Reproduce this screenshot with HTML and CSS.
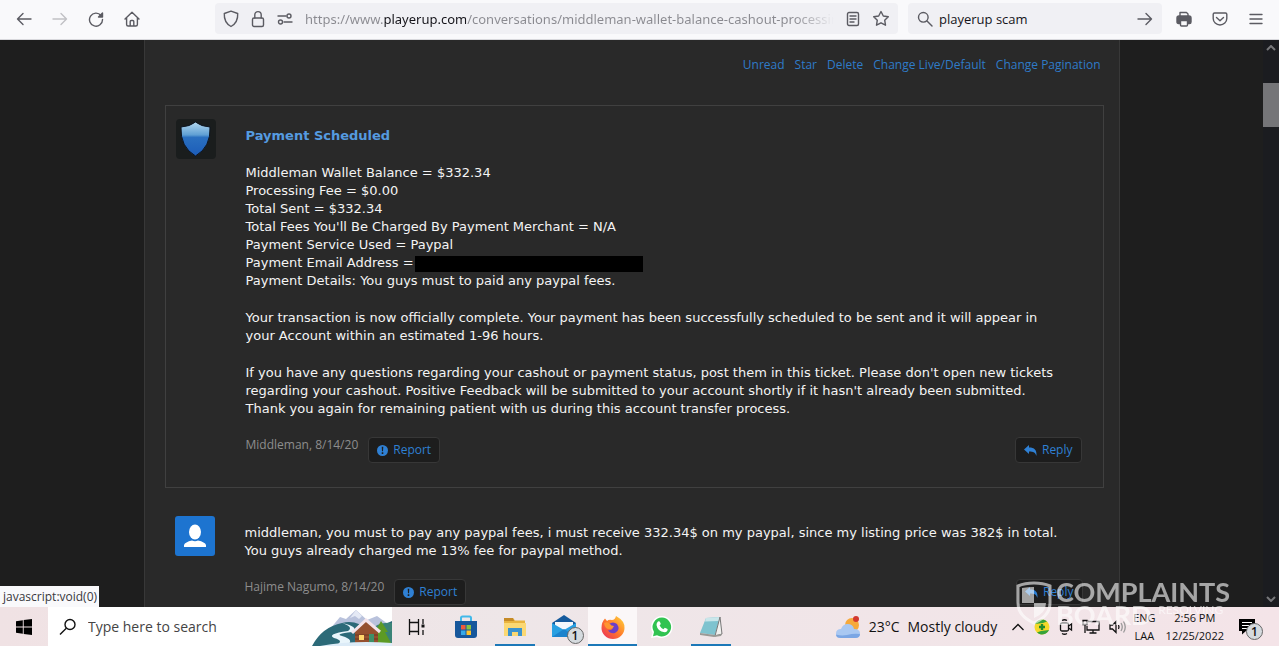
FILE: index.html
```
<!DOCTYPE html>
<html lang="en">
<head>
    <meta charset="utf-8">
    <title>Payment Scheduled</title>
    <link rel="stylesheet" href="styles.css">
</head>
<body>

<!-- browser toolbar -->
<header class="toolbar">
    <div class="nav-buttons">
        <button class="icon-btn" aria-label="Back">
            <svg width="16" height="16" viewBox="0 0 16 16"><path d="M15 8H1.5M7 2.5L1.5 8L7 13.5"/></svg>
        </button>
        <button class="icon-btn off" aria-label="Forward">
            <svg width="16" height="16" viewBox="0 0 16 16"><path d="M1 8h13.5M9 2.5L14.5 8L9 13.5"/></svg>
        </button>
        <button class="icon-btn" aria-label="Reload">
            <svg width="16" height="16" viewBox="0 0 16 16"><path d="M13 4.500A6.500 6.500 0 1 0 14.500 8.500"/><path class="fill" d="M14.500 2v4H10.500z"/></svg>
        </button>
        <button class="icon-btn" aria-label="Home">
            <svg width="16" height="16" viewBox="0 0 16 16"><path d="M1 8L8 1.3L15 8M2.6 7v6.5q0 1.5 1.5 1.5h7.8q1.5 0 1.5-1.5V7M6.2 15v-4.5q0-1 1-1h1.6q1 0 1 1V15"/></svg>
        </button>
    </div>
    <div class="address">
        <svg width="16" height="18" viewBox="0 0 16 18"><path d="M8 1.2L14.7 3.5Q15.2 12.5 8 16.5Q.8 12.5 1.3 3.5Z"/></svg>
        <svg width="14" height="18" viewBox="0 0 14 18"><rect x="1.5" y="8" width="11" height="8.5" rx="1.5"/><path d="M3.8 8V4.8a3.2 3.2 0 0 1 6.4 0V8"/></svg>
        <svg width="16" height="14" viewBox="0 0 16 14"><path d="M1 4h8M7 10h8"/><circle cx="12" cy="4" r="2"/><circle cx="3.5" cy="10" r="2"/></svg>
        <input class="url" type="text" aria-label="Address" value="https://www.playerup.com/conversations/middleman-wallet-balance-cashout-processing">
        <svg width="14" height="16" viewBox="0 0 14 16"><rect x="1.5" y="1.5" width="11" height="13" rx="1.5"/><path d="M4 5h6M4 8h6M4 11h4"/></svg>
        <svg width="18" height="17" viewBox="0 0 18 17"><path d="M9 1.5L11.3 6L16.3 6.7L12.7 10.2L13.5 15.2L9 12.8L4.5 15.2L5.3 10.2L1.7 6.7L6.7 6Z"/></svg>
    </div>
    <div class="search">
        <svg width="16" height="16" viewBox="0 0 16 16"><circle cx="6.3" cy="6.3" r="4.8"/><path d="M10 10l5 5"/></svg>
        <input type="text" aria-label="Search" value="playerup scam">
        <button class="icon-btn" aria-label="Go">
            <svg width="16" height="16" viewBox="0 0 16 16"><path d="M1 8h13.5M9 2.5L14.5 8L9 13.5"/></svg>
        </button>
    </div>
    <div class="tools">
        <button class="icon-btn" aria-label="Print">
            <svg width="16" height="16" viewBox="0 0 16 16"><path d="M4 6V1.5h6.5L12 3v3"/><path class="fill" d="M3 5h10q2 0 2 2v4q0 1.5-1.5 1.5h-11Q1 12.5 1 11V7q0-2 2-2z"/><path class="paper" d="M4.5 9.5h7V14q0 1-1 1h-5q-1 0-1-1z"/></svg>
        </button>
        <button class="icon-btn" aria-label="Save to Pocket">
            <svg width="16" height="16" viewBox="0 0 16 16"><path d="M2.5 2h11q1.3 0 1.3 1.3V7.5a6.8 6.5 0 0 1-13.6 0V3.3Q1.2 2 2.5 2zM4.5 6.5L8 9.8l3.5-3.3"/></svg>
        </button>
        <button class="icon-btn" aria-label="Menu">
            <svg width="16" height="16" viewBox="0 0 16 16"><path d="M2 3.5h12M2 8h12M2 12.5h12"/></svg>
        </button>
    </div>
</header>

<!-- the page -->
<div class="viewport">
    <main class="page">
        <div class="container">
            <nav class="links">
                <a href="#">Unread</a>
                <a href="#">Star</a>
                <a href="#">Delete</a>
                <a href="#">Change Live/Default</a>
                <a href="#">Change Pagination</a>
            </nav>

            <article class="message staff">
                <svg class="avatar" width="40" height="40" viewBox="0 0 40 40">
                    <defs>
                        <linearGradient id="top" x1="0" y1="0" x2="0" y2="1"><stop offset="0" stop-color="#b4d8ef"/><stop offset=".38" stop-color="#5fa0d4"/><stop offset=".45" stop-color="#2a70c0"/><stop offset="1" stop-color="#1c5cb8"/></linearGradient>
                    </defs>
                    <rect width="40" height="40" rx="4" fill="#1a1d1d"/>
                    <path d="M19.5 3Q25 7.5 34 8Q35 28 19.5 37Q4 28 5 8Q14 7.5 19.5 3Z" fill="url(#top)" stroke="#0c1420"/>
                </svg>
                <div class="body">
                    <h2>Payment Scheduled</h2>
                    <p>
                        Middleman Wallet Balance = $332.34<br>
                        Processing Fee = $0.00<br>
                        Total Sent = $332.34<br>
                        Total Fees You'll Be Charged By Payment Merchant = N/A<br>
                        Payment Service Used = Paypal<br>
                        Payment Email Address =<span class="redacted"></span><br>
                        Payment Details: You guys must to paid any paypal fees.
                    </p>
                    <p>Your transaction is now officially complete. Your payment has been successfully scheduled to be sent and it will appear in<br>your Account within an estimated 1-96 hours.</p>
                    <p>If you have any questions regarding your cashout or payment status, post them in this ticket. Please don't open new tickets<br>regarding your cashout. Positive Feedback will be submitted to your account shortly if it hasn't already been submitted.<br>Thank you again for remaining patient with us during this account transfer process.</p>
                    <div class="meta">
                        <span>Middleman, 8/14/20</span>
                        <button class="btn"><svg width="11" height="11" viewBox="0 0 11 11"><circle cx="5.5" cy="5.5" r="5.5"/><path class="mark" d="M4.7 1.8h1.6l-.3 4.4h-1zM4.7 7.3h1.6v1.6H4.7z"/></svg>Report</button>
                        <button class="btn reply"><svg width="13" height="11" viewBox="0 0 13 11"><path d="M5 0v2.6C10.5 2.6 12.8 5 12.5 11C11.5 7.5 9.5 6.4 5 6.4V9L0 4.5Z"/></svg>Reply</button>
                    </div>
                </div>
            </article>

            <article class="message">
                <svg class="avatar" width="40" height="40" viewBox="0 0 40 40">
                    <rect width="40" height="40" rx="3" fill="#1d74d0"/>
                    <ellipse cx="20" cy="16" rx="6" ry="7.5" fill="#fff"/>
                    <path d="M9 31v-2Q10 26 17 24.5q3 1.5 6 0Q30 26 31 29v2z" fill="#fff"/>
                </svg>
                <div class="body">
                    <p>middleman, you must to pay any paypal fees, i must receive 332.34$ on my paypal, since my listing price was 382$ in total.<br>You guys already charged me 13% fee for paypal method.</p>
                    <div class="meta">
                        <span>Hajime Nagumo, 8/14/20</span>
                        <button class="btn"><svg width="11" height="11" viewBox="0 0 11 11"><circle cx="5.5" cy="5.5" r="5.5"/><path class="mark" d="M4.7 1.8h1.6l-.3 4.4h-1zM4.7 7.3h1.6v1.6H4.7z"/></svg>Report</button>
                        <button class="btn reply"><svg width="13" height="11" viewBox="0 0 13 11"><path d="M5 0v2.6C10.5 2.6 12.8 5 12.5 11C11.5 7.5 9.5 6.4 5 6.4V9L0 4.5Z"/></svg>Reply</button>
                    </div>
                </div>
            </article>
        </div>
    </main>
    <div class="scrollbar">
        <svg width="10" height="6" viewBox="0 0 10 6"><path d="M1 5l4-4l4 4"/></svg>
        <div class="thumb"></div>
        <svg width="10" height="6" viewBox="0 0 10 6"><path d="M1 1l4 4l4-4"/></svg>
    </div>
    <div class="status">javascript:void(0)</div>
</div>

<!-- windows taskbar -->
<footer class="taskbar">
    <button class="start" aria-label="Start">
        <svg width="16" height="16" viewBox="0 0 16 16"><path d="M0 2.2L6.8 1.2V7.5H0zM7.7 1.1L16 0V7.5H7.700zM0 8.4h6.8v6.3L0 13.8zM7.700 8.4H16V16L7.7 14.9z"/></svg>
    </button>
    <div class="task-search">
        <svg width="18" height="18" viewBox="0 0 18 18"><circle cx="11" cy="6.5" r="5" fill="none" stroke="#111" stroke-width="1.4"/><path d="M7.3 10.2L1 16.5" stroke="#111" stroke-width="1.4"/></svg>
        <input type="text" aria-label="Type here to search" placeholder="Type here to search">
        <svg class="scene" width="80" height="39" viewBox="0 0 80 39">
            <path d="M18 22L28 10L34 12L44 3L55 13L65 9L80 20V39H18z" fill="#b9c2dc"/>
            <path d="M44 3l-6 8 5-2 4 3 3-3z" fill="#e4e9f5"/>
            <path d="M0 39Q10 20 30 16Q44 12 58 24L80 14V39z" fill="#2c6a78"/>
            <path d="M56 24Q68 14 80 16V39H56z" fill="#3a8377"/>
            <path d="M30 16Q42 20 36 24Q14 27 22 31Q34 34 22 39H34Q44 33 30 29Q22 27 40 25Q48 20 30 16z" fill="#e9f5fb"/>
            <path d="M69 14l7 11h-3l6 11H60l6-11h-3z" fill="#5d9a24"/>
            <path d="M43 24L54 14L66 24V37H43z" fill="#95502f"/>
            <path d="M43 28h23M43 32h23" stroke="#6f3620"/>
            <path d="M40 26L54 13L68 25" fill="none" stroke="#f3e3ea" stroke-width="3"/>
            <path d="M47 28h5v5h-5z" fill="#ffd66b"/><path d="M57 27h5v10h-5z" fill="#3f8f68"/>
            <path d="M8 39Q40 33 80 36V39z" fill="#dcebf7"/>
        </svg>
    </div>
    <div class="apps">
        <button aria-label="Task View">
            <svg width="18" height="16" viewBox="0 0 18 16" fill="none" stroke="#111" stroke-width="1.3"><path d="M1.5 0v3.5h9V0M1.5 16v-3.5h9V16M1.5 3.5v9M10.5 3.5v9M15 0v5M15 11v5"/><path d="M13.5 5.5h3v3h-3z" fill="#111" stroke="none"/></svg>
        </button>
        <button aria-label="Microsoft Store">
            <svg width="24" height="24" viewBox="0 0 24 24"><path d="M7 7V3q0-1.5 1.5-1.5h7Q17 1.5 17 3v4" fill="none" stroke="#42b9ea" stroke-width="2"/><path d="M1 6h22v14q0 3-3 3H4q-3 0-3-3z" fill="#17589c"/><path d="M7 10h4.5v4.5H7z" fill="#ef5a3c"/><path d="M12.5 10H17v4.5h-4.5z" fill="#8ac440"/><path d="M7 15.5h4.5V20H7z" fill="#36a9e8"/><path d="M12.5 15.5H17V20h-4.5z" fill="#fcc32c"/></svg>
        </button>
        <button class="running" aria-label="File Explorer">
            <svg width="24" height="24" viewBox="0 0 24 24"><path d="M1 3h9l2 2.5h10V21H1z" fill="#e9b43f"/><path d="M1 8h22v13H1z" fill="#fbd873"/><path d="M1 3h9l1 3H1z" fill="#c58a27"/><path d="M5 13h14v8h-4v-4H9v4H5z" fill="#3b93cf"/></svg>
        </button>
        <button aria-label="Mail">
            <span class="badged">
                <svg width="26" height="24" viewBox="0 0 26 24"><path d="M1 8L13 0L25 8V22H1z" fill="#155a9c"/><path d="M4 7h18v9H4z" fill="#f4f8fc"/><path d="M1 8l12 7L25 8V22H1z" fill="#28a0e2"/><path d="M1 22L13 14L25 22z" fill="#1b83cd"/></svg>
                <b class="badge">1</b>
            </span>
        </button>
        <button class="running active" aria-label="Firefox">
            <svg width="24" height="24" viewBox="0 0 24 24">
                <defs><linearGradient id="fox" x1="1" y1="0" x2="0" y2="1"><stop offset="0" stop-color="#ffd93b"/><stop offset=".5" stop-color="#ff7a2b"/><stop offset="1" stop-color="#e8265f"/></linearGradient></defs>
                <path d="M15 1Q24 6 23.5 13A11.5 11 0 0 1 .5 13Q.5 7 4 3.5L6 6Q8 4 11 5Q14 5 15 1z" fill="url(#fox)"/>
                <path d="M8 9Q12 6 16 9Q20 15 14 18Q9 19 7 15Q10 16 12 13Q8 12 8 9z" fill="#6a3fc8"/>
                <path d="M3 8Q7 6 9 9Q10 11 13 11Q12 14 8 14Q4 14 3 8z" fill="#ff9530"/>
            </svg>
        </button>
        <button aria-label="WhatsApp">
            <svg width="24" height="24" viewBox="0 0 24 24"><path d="M12 1A11 11 0 1 1 7 22L1 23L2.5 17.5A11 11 0 0 1 12 1z" fill="#fff"/><path d="M12 2.5A9.5 9.5 0 1 1 7 20.3L3 21.3L4 17A9.5 9.5 0 0 1 12 2.5z" fill="#31c351"/><path d="M8 6.5q1.5-1 2.2 1l.6 1.6-1.2 1.5q1.3 2.5 3.8 3.6l1.4-1.5 2.8 1.4q.3 3-3 3.2Q7.5 16.5 6.5 10Q6.5 7.5 8 6.5z" fill="#fff"/></svg>
        </button>
        <button class="running" aria-label="Notepad">
            <svg width="24" height="24" viewBox="0 0 24 24"><path d="M7 3L21 2L16 20L1 18z" fill="#7fc3cf"/><path d="M7 3L21 2L20 6L6 6.5z" fill="#c9e6ea"/><path d="M21 2L23 19L16 21z" fill="#f1f1ef" stroke="#777"/><path d="M1 18L16 20L23 19L22 21L15 22L1 20z" fill="#9a9a96"/></svg>
        </button>
    </div>
    <div class="weather">
        <svg width="26" height="24" viewBox="0 0 26 24"><circle cx="17" cy="10" r="7" fill="#f6a93b"/><circle cx="21" cy="4" r="3" fill="#d2382f"/><path d="M6 23q-5 0-5-4.5Q1 14 6 14Q8 9 12.5 9Q18 9 19 14Q25 14 25 18.5Q25 23 20 23z" fill="#a9c8f2"/><path d="M6 23q-5 0-5-3.5Q6 21 12 20Q19 18 25 19Q25 23 20 23z" fill="#7ba6e4"/></svg>
        <span>23°C</span>
        <span>Mostly cloudy</span>
    </div>
    <div class="tray">
        <svg width="14" height="10" viewBox="0 0 14 10"><path d="M1.5 8L7 2.5L12.5 8"/></svg>
        <svg width="16" height="16" viewBox="0 0 16 16"><circle cx="8" cy="8" r="7.5" fill="#f3d92a" stroke="none"/><path d="M1 5A7.5 7.5 0 0 1 13 2.5L9 4zM15 11A7.5 7.5 0 0 1 3 13.5L7 12z" fill="#35a33a" stroke="none"/><path d="M8 5v6M5 8h6" stroke="#1f8a2d" stroke-width="2.4"/></svg>
        <svg width="14" height="16" viewBox="0 0 14 16"><rect x="1.5" y="4" width="8" height="8" rx="1.5"/><path d="M9.5 7l3-2v6l-3-2M3 1.5Q5.5 0 8 1.5M3 14.5Q5.5 16 8 14.5"/></svg>
        <svg width="18" height="16" viewBox="0 0 18 16"><path d="M6 2.5h11v8.5H5V7M11 11v3M7.5 14h7M1 1.5h4v4H1zM3 5.5V14"/></svg>
        <svg width="18" height="16" viewBox="0 0 18 16"><path d="M1 6h2.5L7 2.5v11L3.5 10H1zM9.5 6q1 2 0 4"/><path d="M12 4q2.5 4 0 8M14.5 2.5q3.5 5.5 0 11" stroke="#999"/></svg>
    </div>
    <div class="stack lang"><span>ENG</span><span>LAA</span></div>
    <div class="stack"><span>2:56 PM</span><span>12/25/2022</span></div>
    <button class="notify" aria-label="Notifications">
        <span class="badged">
            <svg width="18" height="17" viewBox="0 0 18 17"><path d="M1 1h16v12H8l-4 3.5V13H1z"/><path d="M4 4.5h10M4 7.5h10M4 10.5h6" stroke="#fff"/></svg>
            <b class="badge">1</b>
        </span>
    </button>
</footer>

<!-- watermark over page and taskbar -->
<div class="watermark">
    <svg width="36" height="44" viewBox="0 0 36 44"><path d="M18 2Q27 2 34 5V22Q34 35 18 42Q2 35 2 22V5Q9 2 18 2z" fill="none" stroke="#fff" stroke-width="3"/><path d="M6 7Q12 6 18 6V22H6zM18 22H30Q30 32 18 37z" fill="#fff"/></svg>
    <div class="mark-text">
        <span>COMPLAINTS</span>
        <span>BOARD <small>RESOLVING</small></span>
    </div>
</div>

</body>
</html>
```
FILE: styles.css
```
* {
    box-sizing: border-box;
}

body {
    margin: 0;
    height: 100vh;
    display: grid;
    grid-template-rows: 40px 1fr 39px;
    overflow: hidden;
    background: #1e1e1e;
    font-family: "Open Sans", "Noto Sans", sans-serif;
    font-size: 12px;
}

button {
    border: 0;
    padding: 0;
    background: none;
    font: inherit;
}

input {
    border: 0;
    padding: 0;
    outline: 0;
    min-width: 0;
    background: none;
    font: inherit;
}

svg {
    display: block;
    flex: none;
}

/* browser toolbar */
.toolbar {
    display: flex;
    align-items: center;
    padding: 0 15px 2px 16px;
    background: #f9f9fb;
    border-bottom: 1px solid #d8d8dc;
    font-size: 13px;
}

.toolbar svg {
    fill: none;
    stroke: #5b5b62;
    stroke-width: 1.4;
    stroke-linejoin: round;
    stroke-linecap: round;
}

.toolbar .fill {
    fill: #5b5b62;
}

.toolbar .paper {
    fill: #f9f9fb;
}

.nav-buttons {
    display: flex;
    gap: 20px;
    width: 199px;
}

.off {
    opacity: .35;
}

.address,
.search {
    display: flex;
    align-items: center;
    height: 31px;
    background: #f0f0f4;
    border-radius: 4px;
}

.address {
    flex: 1;
    gap: 12px;
    padding: 0 8px;
}

.url {
    flex: 1;
    font-family: "Noto Sans", "Open Sans", sans-serif;
    /* the host is darker and the end fades out */
    background: linear-gradient(to right, #8a8a90 78px, #15141a 78px, #15141a 161px, #8a8a90 161px, #8a8a90 calc(100% - 40px), #f0f0f4);
    background-clip: text;
    -webkit-background-clip: text;
    color: transparent;
}

.search {
    width: 254px;
    margin-left: 10px;
    padding: 0 9px;
    gap: 6px;
}

.search input {
    flex: 1;
    color: #15141a;
}

.tools {
    display: flex;
    gap: 20px;
    margin-left: 14px;
}

/* page */
.viewport {
    position: relative;
    display: flex;
    min-height: 0;
    overflow: hidden;
}

.page {
    flex: 1;
}

.container {
    max-width: 976px;
    min-height: 100%;
    margin: 0 auto;
    padding: 16px 15px 0 20px;
    background: #292929;
    border: solid #383838;
    border-width: 0 1px;
}

.links {
    display: flex;
    justify-content: flex-end;
    gap: 10px;
    padding-right: 3px;
    line-height: 18px;
}

a {
    color: #2f7bc8;
    text-decoration: none;
}

.message {
    display: flex;
    gap: 30px;
    padding: 13px 21px 0 10px;
}

.staff {
    margin-top: 31px;
    margin-bottom: 15px;
    padding-bottom: 23px;
    border: 1px solid #404040;
}

.body {
    flex: 1;
    padding-top: 8px;
    color: #f4f4f4;
    font-family: Verdana, "DejaVu Sans", sans-serif;
    font-size: 13px;
    line-height: 18px;
    white-space: nowrap;
}

.body h2 {
    margin: 0 0 19px;
    color: #559be0;
    font-size: 13px;
}

.body p {
    margin: 0 0 19px;
}

.body p:nth-last-child(2) {
    margin-bottom: 18px;
}

.redacted {
    display: inline-block;
    width: 228px;
    height: 16px;
    margin-left: 1px;
    background: #000;
    vertical-align: middle;
}

.meta {
    display: flex;
    align-items: center;
    gap: 10px;
    color: #8d8d8d;
    font-family: "Open Sans", "Noto Sans", sans-serif;
    font-size: 12px;
}

.meta span {
    padding-bottom: 10px;
}

.btn {
    display: flex;
    align-items: center;
    gap: 5px;
    height: 26px;
    padding: 0 8px;
    background: #1d1d1d;
    border: 1px solid #373737;
    border-radius: 4px;
    color: #2f80d4;
}

.btn svg {
    fill: #2f80d4;
}

.btn .mark {
    fill: #1d1d1d;
}

.reply {
    margin-left: auto;
}

.scrollbar {
    display: flex;
    flex-direction: column;
    align-items: center;
    width: 16px;
    padding: 5px 0;
    background: #1b1c20;
}

.scrollbar svg {
    fill: none;
    stroke: #77777a;
    stroke-width: 2;
}

.scrollbar svg:last-child {
    margin-top: auto;
}

.thumb {
    width: 100%;
    height: 44px;
    margin-top: 32px;
    background: #757578;
}

.status {
    position: absolute;
    left: 0;
    bottom: 0;
    height: 21px;
    padding: 0 2px 0 3px;
    background: #f9f9fb;
    color: #38383d;
    line-height: 22px;
}

/* taskbar */
.taskbar {
    display: flex;
    align-items: center;
    background: linear-gradient(to right, #f0e2e4, #eee6e8 40%, #f4e4e8);
    color: #111;
}

.start {
    display: flex;
    justify-content: center;
    width: 48px;
}

.task-search {
    display: flex;
    align-items: center;
    width: 344px;
    height: 100%;
    padding-left: 11px;
    gap: 11px;
    background: #fff;
    font-size: 14px;
}

.task-search input {
    flex: 1;
}

.task-search input::placeholder {
    color: #444;
    opacity: 1;
}

.apps {
    display: flex;
    height: 100%;
}

.apps button {
    display: flex;
    align-items: center;
    justify-content: center;
    width: 49px;
}

/* bar under the icon of an open app */
.apps .running {
    background: linear-gradient(#1c78b8, #1c78b8) bottom / 40px 2px no-repeat;
}

.apps .active {
    background-color: #fbf7f8;
    background-size: 100% 2px;
}

.badged {
    position: relative;
}

.badge {
    position: absolute;
    right: -7px;
    bottom: -5px;
    width: 17px;
    height: 17px;
    border: 1px solid #666;
    border-radius: 50%;
    background: #d5dade;
    color: #111;
    font-size: 12px;
    font-weight: 600;
    line-height: 15px;
    text-align: center;
}

.weather {
    display: flex;
    align-items: center;
    gap: 8px;
    margin-left: auto;
    font-size: 14px;
}

.tray {
    display: flex;
    align-items: center;
    gap: 9px;
    margin-left: 14px;
}

.tray svg {
    fill: none;
    stroke: #111;
    stroke-width: 1.3;
}

.stack {
    display: flex;
    flex-direction: column;
    align-items: center;
    margin-left: 10px;
    font-size: 11px;
    line-height: 18px;
}

.lang {
    margin-left: 6px;
}

.notify {
    margin: 0 23px 0 14px;
}

/* watermark */
.watermark {
    position: absolute;
    right: 49px;
    bottom: 20px;
    display: flex;
    align-items: center;
    gap: 4px;
    opacity: .6;
    color: #fff;
    font-family: Lato, sans-serif;
    font-size: 27px;
    font-weight: 700;
    line-height: 23px;
    pointer-events: none;
}

.mark-text {
    display: flex;
    flex-direction: column;
}

.mark-text small {
    font-size: 12px;
    font-weight: 400;
    vertical-align: top;
    line-height: 14px;
}
```
